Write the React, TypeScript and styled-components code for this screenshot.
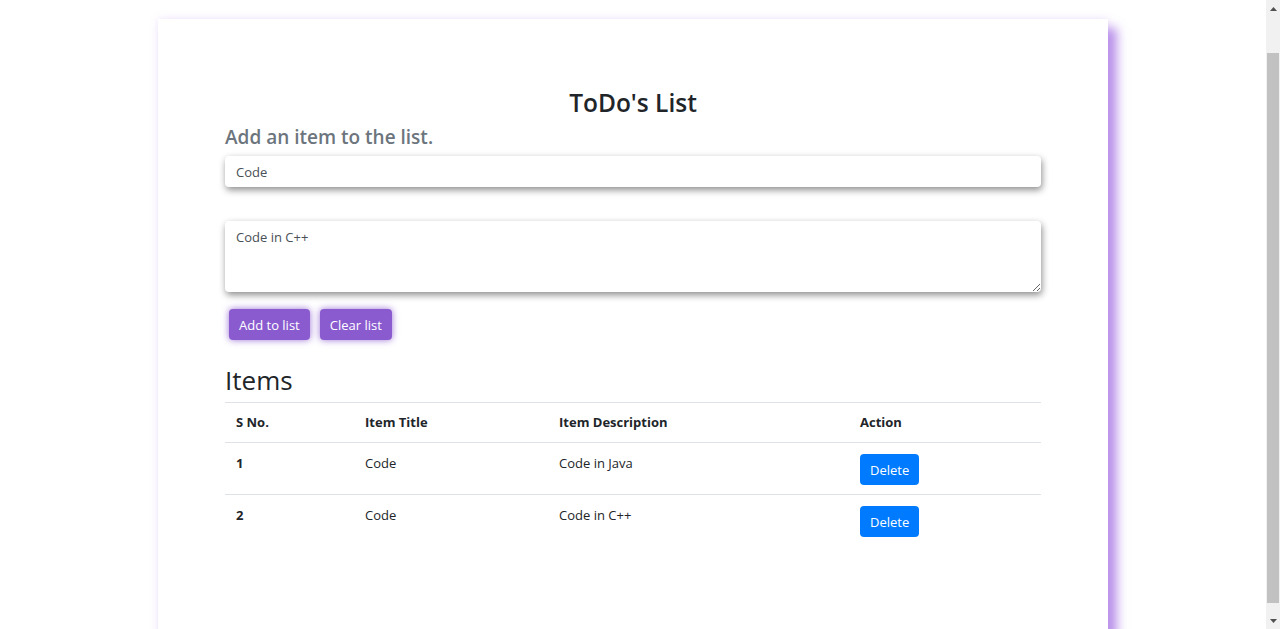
import React from "react";
import styled, { createGlobalStyle } from "styled-components";

const GlobalStyle = createGlobalStyle`
  html, body {
    margin: 0;
    padding: 0;
    background: #ffffff;
    font-family: "Open Sans", "Noto Sans", sans-serif;
    color: #212529;
  }
  * { box-sizing: border-box; }
`;

const Page = styled.div`
  display: flex;
  align-items: flex-start;
`;

const Viewport = styled.div`
  flex: 1;
  padding: 19px 0 30px;
`;

const ScrollTrack = styled.div`
  position: sticky;
  top: 0;
  flex-shrink: 0;
  width: 14px;
  height: 100vh;
  background: #f1f1f1;
  display: flex;
  flex-direction: column;
  align-items: center;
`;

const ScrollArrow = styled.div`
  height: 17px;
  width: 100%;
  display: flex;
  align-items: center;
  justify-content: center;
`;

const ScrollThumb = styled.div`
  width: 12px;
  flex: 1;
  margin: 36px 0 9px;
  background: #c1c1c1;
`;

const Card = styled.main`
  width: 950px;
  min-height: 640px;
  margin: 0 auto;
  background: #ffffff;
  box-shadow: 0 0 8px rgba(190, 150, 240, 0.25), 9px 9px 10px rgba(170, 120, 230, 0.8);
  padding: 68px 67px 40px;
`;

const Title = styled.h3`
  margin: 0;
  text-align: center;
  font-size: 24.5px;
  font-weight: 600;
  line-height: 32px;
  color: #212529;
`;

const Subtitle = styled.h5`
  margin: 6px 0 7px;
  font-size: 19px;
  font-weight: 600;
  line-height: 24px;
  color: #6c757d;
`;

const fieldBase = `
  display: block;
  width: 100%;
  border: none;
  border-radius: 4px;
  background: #ffffff;
  font-family: "Open Sans", "Noto Sans", sans-serif;
  font-size: 13px;
  color: #495057;
  padding: 6px 11px;
  box-shadow: 1px 3px 7px rgba(0, 0, 0, 0.45);
  outline: none;
`;

const TextInput = styled.input`
  ${fieldBase}
  height: 31px;
`;

const TextArea = styled.textarea`
  ${fieldBase}
  height: 71px;
  margin-top: 34px;
  padding-top: 7px;
  line-height: 19px;
`;

const ButtonRow = styled.div`
  display: flex;
  gap: 10px;
  margin: 17px 0 0 4px;
`;

const PurpleButton = styled.button`
  height: 31px;
  padding: 0 10px;
  border: none;
  border-radius: 4px;
  background: #8a5bcf;
  color: #ffffff;
  font-family: "Open Sans", "Noto Sans", sans-serif;
  font-size: 13px;
  box-shadow: 0 0 7px rgba(138, 91, 207, 0.85);
  cursor: pointer;
`;

const SectionTitle = styled.h2`
  margin: 24px 0 6px;
  font-size: 26px;
  font-weight: 500;
  line-height: 32px;
  color: #212529;
`;

const Table = styled.table`
  width: 100%;
  border-collapse: collapse;
  font-size: 13px;
  line-height: 19px;
  color: #212529;
`;

const HeadCell = styled.th<{ $w?: string }>`
  text-align: left;
  font-weight: 700;
  padding: 10px 11px 10px;
  border-top: 1px solid #dee2e6;
  border-bottom: 1px solid #dee2e6;
  width: ${(p) => p.$w || "auto"};
`;

const Cell = styled.td<{ $bold?: boolean }>`
  vertical-align: top;
  padding: 11px 11px 9px;
  border-top: 1px solid #dee2e6;
  font-weight: ${(p) => (p.$bold ? 700 : 400)};
`;

const DeleteButton = styled.button`
  display: block;
  height: 31px;
  padding: 0 10px;
  border: none;
  border-radius: 4px;
  background: #007bff;
  color: #ffffff;
  font-family: "Open Sans", "Noto Sans", sans-serif;
  font-size: 13px;
  cursor: pointer;
`;

const items = [
  { title: "Code", desc: "Code in Java" },
  { title: "Code", desc: "Code in C++" },
];

export default function App() {
  return (
    <Page>
      <GlobalStyle />
      <Viewport>
        <Card>
          <Title>ToDo's List</Title>
          <Subtitle>Add an item to the list.</Subtitle>
          <TextInput defaultValue="Code" />
          <TextArea defaultValue="Code in C++" />
          <ButtonRow>
            <PurpleButton>Add to list</PurpleButton>
            <PurpleButton>Clear list</PurpleButton>
          </ButtonRow>
          <SectionTitle>Items</SectionTitle>
          <Table>
            <thead>
              <tr>
                <HeadCell $w="129px">S No.</HeadCell>
                <HeadCell $w="194px">Item Title</HeadCell>
                <HeadCell $w="301px">Item Description</HeadCell>
                <HeadCell>Action</HeadCell>
              </tr>
            </thead>
            <tbody>
              {items.map((it, i) => (
                <tr key={i}>
                  <Cell $bold>{i + 1}</Cell>
                  <Cell>{it.title}</Cell>
                  <Cell>{it.desc}</Cell>
                  <Cell>
                    <DeleteButton>Delete</DeleteButton>
                  </Cell>
                </tr>
              ))}
            </tbody>
          </Table>
        </Card>
      </Viewport>
      <ScrollTrack aria-hidden="true">
        <ScrollArrow>
          <svg width="7" height="4" viewBox="0 0 7 4">
            <path d="M0 4 L3.5 0 L7 4 Z" fill="#505050" />
          </svg>
        </ScrollArrow>
        <ScrollThumb />
        <ScrollArrow>
          <svg width="7" height="4" viewBox="0 0 7 4">
            <path d="M0 0 L3.5 4 L7 0 Z" fill="#505050" />
          </svg>
        </ScrollArrow>
      </ScrollTrack>
    </Page>
  );
}
